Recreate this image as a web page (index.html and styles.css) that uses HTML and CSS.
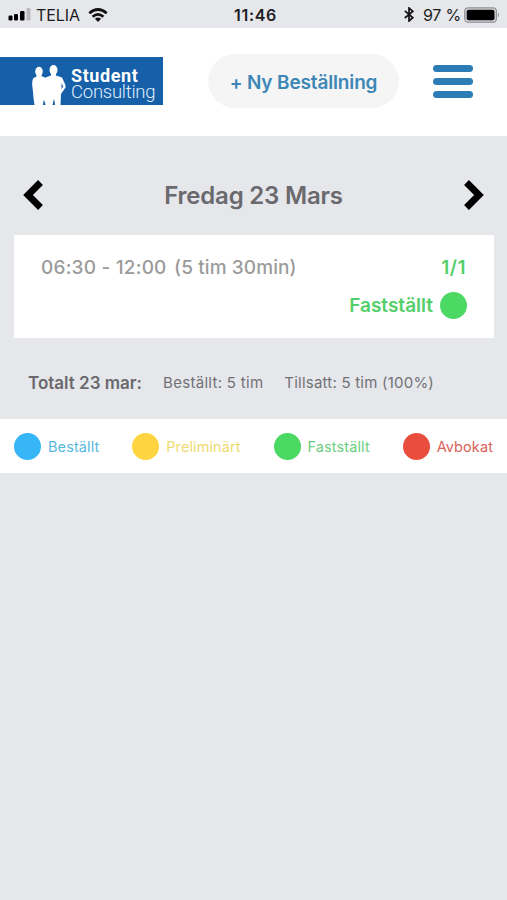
FILE: index.html
```html
<!DOCTYPE html>
<html lang="sv">
<head>
<meta charset="utf-8">
<title>Student Consulting</title>
<link rel="stylesheet" href="styles.css">
</head>
<body>
<div class="status">
  <div class="status-left">
    <svg class="signal" width="23" height="13" viewBox="0 0 23 13"><rect x="0.500" y="7.500" width="4" height="5" rx="1.200"/><rect x="6" y="6" width="4" height="6.500" rx="1.200"/><rect x="12" y="3" width="4.500" height="9.500" rx="1.200"/><rect x="18.500" y="0" width="4" height="12.500" rx="1.200" fill="#b9b9bf"/></svg>
    <span class="carrier">TELIA</span>
    <svg class="wifi" width="20" height="14" viewBox="0 0 20 14"><g fill="none" stroke="#111" stroke-width="2.700"><path d="M1.300 5.300Q10-2.300 18.700 5.300"/><path d="M4.600 8.800Q10 4 15.400 8.800"/></g><path d="M6.900 10.700Q10 8.200 13.100 10.700L10 13.900Z" fill="#111"/></svg>
  </div>
  <span class="clock">11:46</span>
  <div class="status-right">
    <svg width="10" height="15" viewBox="0 0 10 15"><path d="M.8 3.900L8.800 10.600L5 14V1L8.800 4.300L.8 11" fill="none" stroke="#111" stroke-width="1.700"/></svg>
    <span class="percent">97 %</span>
    <svg width="36" height="16" viewBox="0 0 36 16"><rect x=".8" y=".8" width="31.600" height="14.400" rx="3.500" fill="#d8d8dc" stroke="#8f8f94" stroke-width="1.300"/><rect x="2.700" y="2.700" width="27.800" height="10.600" rx="2"/><path d="M34 5.500Q36 8 34 10.500Z" fill="#8f8f94"/></svg>
  </div>
</div>
<header class="header">
  <div class="logo">
    <svg class="people" width="34" height="41" viewBox="0 0 34 41"><g fill="#fff"><ellipse cx="7" cy="7.500" rx="3.800" ry="4.700"/><path d="M4.500 8V12.500L1.500 14Q0 16 .2 21L1 28L1.500 34L2.500 41H11L11.500 36L13 41H15V14.500L9.500 12V8Z"/><ellipse cx="21.500" cy="6" rx="4" ry="5"/><path d="M19 7V11.500L13.500 13.500L12 19L13 26L14.500 29L15 41H20.500L22 35L23 41H28.500L29 30L33.500 23.500Q34 22 33 20L30 13.500L24 11.500V7Z"/></g><path d="M11.800 41L12.500 36L13.500 41ZM21 41L22 36L22.800 41ZM29.500 19L31.200 22.500L29.500 25Z" fill="#1560a8"/></svg>
    <div class="logo-text"><span class="logo-strong">Student</span><span class="logo-light">Consulting</span></div>
  </div>
  <div class="new-order"><span>+ Ny Beställning</span></div>
  <div class="menu"><i></i><i></i><i></i></div>
</header>
<main>
  <div class="day">
    <svg width="20" height="30" viewBox="0 0 20 30"><path d="M17.500 2.500L5 15L17.500 27.500" fill="none" stroke="#000" stroke-width="6.800"/></svg>
    <h1>Fredag 23 Mars</h1>
    <svg width="20" height="30" viewBox="0 0 20 30"><path d="M2.500 2.500L15 15L2.500 27.500" fill="none" stroke="#000" stroke-width="6.800"/></svg>
  </div>
  <section class="card">
    <div class="card-row"><span class="time">06:30 - 12:00</span><span class="duration">(5 tim 30min)</span><span class="count">1/1</span></div>
    <div class="card-state"><span>Fastställt</span><i class="dot green"></i></div>
  </section>
  <div class="totals"><b>Totalt 23 mar:</b><span class="ordered">Beställt: 5 tim</span><span class="filled">Tillsatt: 5 tim (100%)</span></div>
  <div class="legend">
    <div class="item blue-text"><i class="dot blue"></i><span>Beställt</span></div>
    <div class="item yellow-text"><i class="dot yellow"></i><span>Preliminärt</span></div>
    <div class="item green-text"><i class="dot green"></i><span>Fastställt</span></div>
    <div class="item red-text"><i class="dot red"></i><span>Avbokat</span></div>
  </div>
</main>
</body>
</html>
```
FILE: styles.css
```css
* { box-sizing: border-box; }
body { margin: 0; min-height: 900px; background: #e6e7eb; font-family: Inter, "Liberation Sans", sans-serif; white-space: nowrap; }
svg { display: block; flex: none; }
.status { display: grid; grid-template-columns: 1fr auto 1fr; align-items: center; height: 28px; padding: 1px 7px 0 8px; color: #1c1c1e; font-size: 16px; }
.status-left, .status-right { display: flex; align-items: center; }
.status-right { justify-content: flex-end; }
.carrier { margin: 0 8px 0 5px; letter-spacing: -0.1px; }
.clock { margin-left: 3px; font-weight: 600; letter-spacing: 0.7px; }
.percent { margin: 0 3px 0 9px; letter-spacing: -0.2px; }
.header { display: flex; align-items: center; height: 108px; background: #fff; }
.logo { display: flex; width: 163px; height: 48px; margin-bottom: 2px; padding: 7px 0 0 32px; background: #1560a8; overflow: hidden; }
.logo-text { display: flex; flex-direction: column; margin-left: 5px; padding-top: 4px; color: #fff; font-family: Roboto, sans-serif; }
.logo-strong { font-size: 18px; line-height: 15px; font-weight: 700; letter-spacing: 0.6px; }
.logo-light { font-size: 18.500px; line-height: 18px; font-weight: 300; letter-spacing: -0.25px; color: #e0eefa; }
.new-order { display: flex; align-items: center; justify-content: center; width: 191px; height: 54px; margin: 0 34px 2px 45px; border-radius: 27px; background: #f5f5f5; color: #3c87b5; font-size: 19px; font-weight: 600; letter-spacing: -0.15px; }
.new-order span { padding-top: 2px; }
.menu { display: flex; flex-direction: column; gap: 5.500px; width: 40px; margin-bottom: 1px; }
.menu i { height: 7.600px; border-radius: 4px; background: #2c7db5; }
.day { display: flex; align-items: center; justify-content: space-between; height: 99px; padding: 18px 23px 0; }
h1 { color: #69696e; font-size: 24px; font-weight: 600; letter-spacing: -0.2px; margin: 1px 0 0; }
.card { height: 103px; margin: 0 13px 0 14px; padding: 20px 27px 0; background: #fff; }
.card-row { display: flex; height: 24px; align-items: center; color: #9b9b9b; font-size: 19px; font-weight: 500; }
.time { letter-spacing: 0.2px; }
.duration { margin-left: 7.500px; letter-spacing: 0.1px; }
.count { margin: 0 1px 0 auto; color: #53cf6a; font-weight: 600; letter-spacing: 0.5px; }
.card-state { display: flex; align-items: center; justify-content: flex-end; height: 28px; margin-top: 12px; color: #53cf6a; font-size: 19px; font-weight: 600; }
.dot { width: 27px; height: 27px; border-radius: 50%; }
.card-state .dot { margin-left: 7px; }
.green { background: #4bd964; }
.blue { background: #37b6f7; }
.yellow { background: #fed541; }
.red { background: #e94d3d; }
.totals { display: flex; align-items: center; height: 81px; padding: 8px 28px 0; color: #717176; font-size: 15px; letter-spacing: 0.3px; }
.totals b { color: #69696e; font-size: 17px; font-weight: 600; letter-spacing: 0; }
.ordered { margin-left: 21px; }
.filled { margin-left: 21px; letter-spacing: 0.22px; }
.legend { display: flex; align-items: center; justify-content: space-between; height: 54px; padding: 0 14px; background: #fff; font-size: 14.500px; letter-spacing: 0.1px; }
.item { display: flex; align-items: center; gap: 7px; }
.item span { padding-top: 1px; }
.blue-text { color: #59b7df; }
.yellow-text { color: #eedb72; }
.green-text { color: #6dcf80; }
.red-text { color: #d96158; }
```
